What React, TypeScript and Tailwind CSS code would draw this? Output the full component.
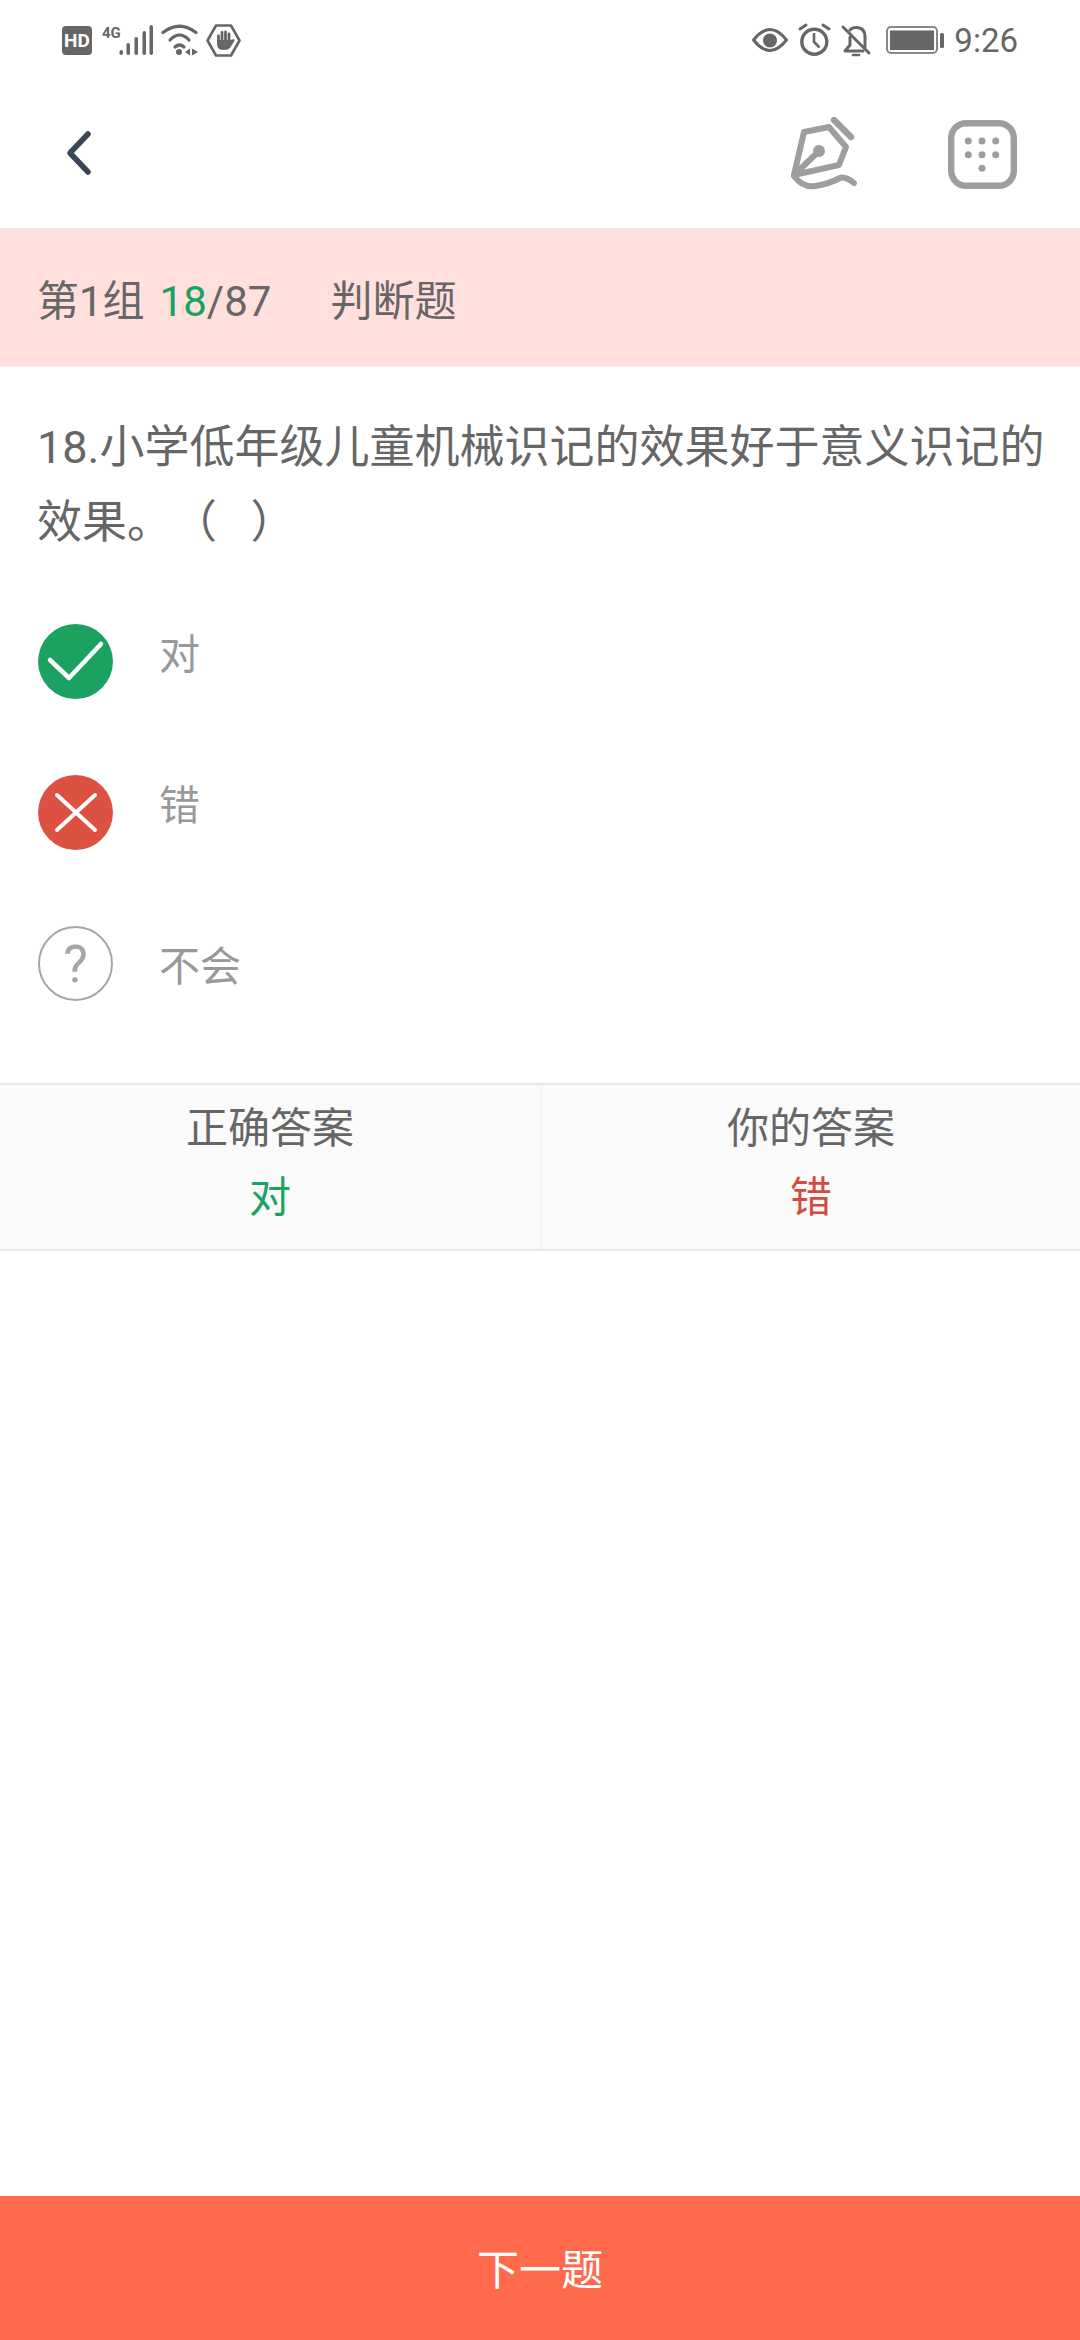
const font = { fontFamily: 'Roboto, "Noto Sans CJK SC", sans-serif' };

function StatusLeft() {
  return (
    <svg width="182" height="40" viewBox="0 0 182 40" className="block">
      <rect x="2" y="6" width="30" height="29" rx="4" fill="#666" />
      <text x="17" y="27" textAnchor="middle" fontSize="19" fontWeight="700" fill="#fff" fontFamily="Roboto">HD</text>
      <text x="42" y="18" fontSize="15" fontWeight="700" fill="#666" fontFamily="Roboto">4G</text>
      <g fill="#666">
        <rect x="59.5" y="30" width="3.5" height="5" rx="1.7" />
        <rect x="66.5" y="23" width="3.5" height="12" rx="1.7" />
        <rect x="74.5" y="17" width="3.5" height="18" rx="1.7" />
        <rect x="82.5" y="11" width="3.5" height="24" rx="1.7" />
        <rect x="89.5" y="5" width="3.5" height="30" rx="1.7" />
      </g>
      <g fill="none" stroke="#666" strokeWidth="3.2" strokeLinecap="round">
        <path d="M103 12.5 Q119.5 0 136 12.5" />
        <path d="M110 20 Q119.5 10 129 20" />
        <path d="M115 27 Q119.5 23 124 27" />
      </g>
      <circle cx="119" cy="32" r="3" fill="#666" />
      <path d="M125 32 L130 28.5 V35.5 Z M132 28.5 L138 32 L132 35.5 Z" fill="#666" />
      <path d="M147.5 20.5 L156 5.5 H171 L179.5 20.5 L171 35.5 H156 Z" fill="none" stroke="#666" strokeWidth="2.6" strokeLinejoin="round" />
      <g stroke="#666" strokeWidth="2.8" strokeLinecap="round">
        <path d="M158.5 23 V16" />
        <path d="M162 23 V12.5" />
        <path d="M165.5 23 V12" />
        <path d="M169 23 V14" />
      </g>
      <path d="M157.2 20 H170.4 L174 19 Q175 20 174 21.5 L170 28 Q168 30 164 30 Q157.2 30 157.2 25 Z" fill="#666" />
    </svg>
  );
}

function StatusRight() {
  return (
    <div className="flex items-center">
      <svg width="200" height="40" viewBox="0 0 200 40" className="block">
        <path d="M3.5 20 Q20 -1 36.5 20 Q20 41 3.5 20 Z" fill="none" stroke="#666" strokeWidth="3" strokeLinejoin="round" />
        <circle cx="20" cy="20.5" r="7" fill="#666" />
        <circle cx="64.3" cy="21.7" r="12.5" fill="none" stroke="#666" strokeWidth="3.4" />
        <path d="M64 13 V22 L69.5 27.5" fill="none" stroke="#666" strokeWidth="2.6" />
        <path d="M50 9 L56 5 M73 5 L79 9" stroke="#666" strokeWidth="3" strokeLinecap="round" />
        <path d="M100 17 V25 L95 31 H113 M115 28 V17 Q115 7.5 106 7.5 Q102 7.5 100 10" fill="none" stroke="#666" strokeWidth="3" strokeLinejoin="round" strokeLinecap="round" />
        <path d="M103 35 H109" stroke="#666" strokeWidth="2.6" strokeLinecap="round" />
        <path d="M93 7 L119 33" stroke="#666" strokeWidth="3" strokeLinecap="round" />
        <rect x="137" y="7" width="50" height="26" rx="4" fill="none" stroke="#888" strokeWidth="2" />
        <rect x="140" y="10.5" width="44" height="19.5" fill="#666" />
        <rect x="190" y="13" width="4" height="15" rx="1.5" fill="#666" />
      </svg>
      <span className="ml-[4px] text-[33px] leading-none text-[#666]">9:26</span>
    </div>
  );
}

function Pen() {
  return (
    <svg width="66" height="74" viewBox="0 0 66 74" className="block">
      <g fill="none" stroke="#9e9e9e" strokeWidth="6" strokeLinejoin="round" strokeLinecap="round">
        <path d="M3 58 L13 15 L38 10 L55 30 L48 48 Z" />
        <path d="M43 3 L60 20" strokeWidth="6.5" />
        <path d="M3 58 L27 35" />
        <path d="M3 59 Q12 71 24 69 Q38 67 50 60.5 Q56 60 63 66" />
      </g>
      <circle cx="28" cy="34" r="6" fill="#9e9e9e" />
    </svg>
  );
}

function Keypad() {
  const dots = [[20.3, 21], [34, 21], [47.7, 21], [20.3, 34.7], [34, 34.7], [47.7, 34.7], [34, 48.3]];
  return (
    <svg width="69" height="69" viewBox="0 0 69 69" className="block">
      <rect x="3.2" y="3.2" width="62.6" height="62.6" rx="15" fill="none" stroke="#9e9e9e" strokeWidth="6.4" />
      {dots.map(([x, y]) => <circle key={`${x}-${y}`} cx={x} cy={y} r="3.5" fill="#9e9e9e" />)}
    </svg>
  );
}

function Option({ icon, label, labelClass }: { icon: React.ReactNode; label: string; labelClass: string }) {
  return (
    <div className="flex items-center pl-[38px]">
      {icon}
      <span className={`ml-[46px] text-[41px] leading-none text-[#999] ${labelClass}`}>{label}</span>
    </div>
  );
}

export default function App() {
  return (
    <div className="flex h-[2340px] w-[1080px] flex-col overflow-hidden bg-white" style={font}>
      <div className="flex h-[80px] items-center justify-between pl-[60px] pr-[62px]">
        <StatusLeft />
        <StatusRight />
      </div>
      <div className="flex h-[150px] items-center justify-between border-b-2 border-[#e8e6e5] pl-[60px] pr-[63px]">
        <svg width="40" height="60" viewBox="0 0 40 60" className="block">
          <path d="M28 10 L10 29 L28 48" fill="none" stroke="#3b4654" strokeWidth="5.5" strokeLinecap="round" strokeLinejoin="round" />
        </svg>
        <div className="flex items-center gap-[91px]">
          <Pen />
          <Keypad />
        </div>
      </div>
      <div className="flex h-[137px] items-center border-b border-[#eeeeee] bg-[#ffe0dc] pl-[37px] pt-[8px] text-[42px] leading-none text-[#666]">
        <span>第1组</span>
        <span className="ml-[15px] text-[#1ba261]">18</span>
        <span>/87</span>
        <span className="ml-[59px]">判断题</span>
      </div>
      <div className="pl-[37px] pr-[20px] pt-[43px] text-[45px] leading-[75px] text-[#666] [text-spacing-trim:space-all]">
        18.小学低年级儿童机械识记的效果好于意义识记的效果。（&nbsp;&nbsp;&nbsp;）
      </div>
      <div className="mt-[64px] flex flex-col gap-[76px]">
        <Option
          labelClass="-mt-[13px]"
          label="对"
          icon={
            <svg width="75" height="75" viewBox="0 0 75 75" className="block">
              <circle cx="37.5" cy="37.5" r="37.5" fill="#1ba261" />
              <path d="M12 36 L31 54 L63 20" fill="none" stroke="#fff" strokeWidth="4.5" strokeLinecap="round" strokeLinejoin="round" />
            </svg>
          }
        />
        <Option
          labelClass="-mt-[13px]"
          label="错"
          icon={
            <svg width="75" height="75" viewBox="0 0 75 75" className="block">
              <circle cx="37.5" cy="37.5" r="37.5" fill="#dd5142" />
              <path d="M19 20 L57 55 M57 20 L19 55" fill="none" stroke="#fff" strokeWidth="4" strokeLinecap="round" />
            </svg>
          }
        />
        <Option
          labelClass="mt-[7px]"
          label="不会"
          icon={
            <svg width="75" height="75" viewBox="0 0 75 75" className="block">
              <circle cx="37.5" cy="37.5" r="36.5" fill="none" stroke="#a6a6a6" strokeWidth="2" />
              <text x="37.5" y="56" textAnchor="middle" fontSize="52" fill="#a6a6a6" fontFamily="Roboto">?</text>
            </svg>
          }
        />
      </div>
      <div className="mt-[82px] grid h-[168px] grid-cols-2 border-y-2 border-[#e8e8e8] bg-[#fafafa] text-center text-[42px] leading-none">
        <div className="flex flex-col items-center pt-[23px] text-[#666]">
          <span>正确答案</span>
          <span className="mt-[27px] text-[#1ba261]">对</span>
        </div>
        <div className="flex flex-col items-center border-l-2 border-[#f4f4f4] pt-[23px] text-[#666]">
          <span>你的答案</span>
          <span className="mt-[27px] text-[#d24a40]">错</span>
        </div>
      </div>
      <div className="flex-1" />
      <div className="flex h-[144px] items-center justify-center bg-[#ff6a4d] pt-[6px] text-[42px] leading-none text-white">
        下一题
      </div>
    </div>
  );
}
